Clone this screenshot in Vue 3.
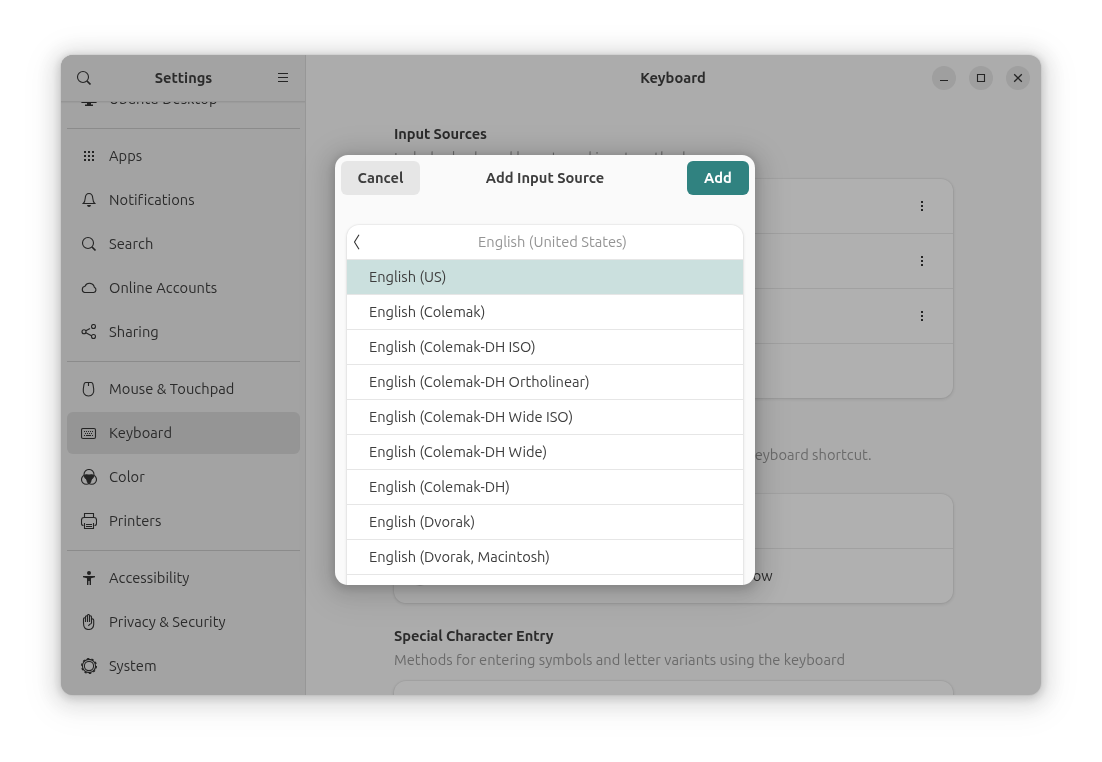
<script setup>
import { reactive } from 'vue'

const state = reactive({
  panel: 'Keyboard',
  layout: 'English (US)',
})

const groups = [
  [{ name: 'Ubuntu Desktop', icon: 'desktop' }],
  [
    { name: 'Apps', icon: 'apps' },
    { name: 'Notifications', icon: 'bell' },
    { name: 'Search', icon: 'search' },
    { name: 'Online Accounts', icon: 'cloud' },
    { name: 'Sharing', icon: 'share' },
  ],
  [
    { name: 'Mouse & Touchpad', icon: 'mouse' },
    { name: 'Keyboard', icon: 'keyboard' },
    { name: 'Color', icon: 'color' },
    { name: 'Printers', icon: 'printer' },
  ],
  [
    { name: 'Accessibility', icon: 'access' },
    { name: 'Privacy & Security', icon: 'hand' },
    { name: 'System', icon: 'system' },
  ],
]

const layouts = [
  'English (US)',
  'English (Colemak)',
  'English (Colemak-DH ISO)',
  'English (Colemak-DH Ortholinear)',
  'English (Colemak-DH Wide ISO)',
  'English (Colemak-DH Wide)',
  'English (Colemak-DH)',
  'English (Dvorak)',
  'English (Dvorak, Macintosh)',
  '',
]
</script>

<template>
  <div class="screen">
    <div class="window">
      <aside class="sidebar">
        <header class="side-header">
          <svg class="icon" viewBox="0 0 16 16"><circle cx="7" cy="7" r="5.5" /><path d="M11 11l3.500 3.500" stroke-width="1.700" /></svg>
          <span class="title">Settings</span>
          <svg class="icon" viewBox="0 0 16 16"><path d="M3 3.500h10M3 7.500h10M3 11.500h10" /></svg>
        </header>
        <nav class="nav">
          <div v-for="(group, i) in groups" :key="i" class="nav-group">
            <div
              v-for="item in group"
              :key="item.name"
              class="nav-item"
              :class="{ active: item.name === state.panel }"
              @click="state.panel = item.name"
            >
              <svg class="icon" viewBox="0 0 16 16">
                <template v-if="item.icon === 'desktop'">
                  <path d="M.5 2.500q0-1 1-1h13q1 0 1 1v8q0 1-1 1h-13q-1 0-1-1z" />
                  <path class="fill" d="M1 9.500h2v1.500H1zM13 9.500h2v1.500h-2zM6 11h4v2.500h2V15H4v-1.500h2z" />
                </template>
                <template v-else-if="item.icon === 'apps'">
                  <path class="fill" d="M3 3h2v2H3zM7 3h2v2H7zM11 3h2v2h-2zM3 7h2v2H3zM7 7h2v2H7zM11 7h2v2h-2zM3 11h2v2H3zM7 11h2v2H7zM11 11h2v2h-2z" />
                </template>
                <template v-else-if="item.icon === 'bell'">
                  <path d="M2.300 11.500h11.400c-1.500-1.200-1.700-2.500-1.900-5C11.600 3 10.300 1.500 8 1.500S4.400 3 4.200 6.500c-.2 2.500-.4 3.800-1.900 5z" />
                  <path class="fill" d="M6 13h4q-.3 2-2 2t-2-2z" />
                </template>
                <template v-else-if="item.icon === 'search'">
                  <circle cx="7" cy="7" r="5.500" />
                  <path d="M11 11l3.500 3.500" stroke-width="1.700" />
                </template>
                <template v-else-if="item.icon === 'cloud'">
                  <path d="M3.500 12.500h9.200a2.800 2.800 0 0 0 .6-5.300A4.900 4.900 0 0 0 4 6.300a3.200 3.200 0 0 0-.5 6.200z" />
                </template>
                <template v-else-if="item.icon === 'share'">
                  <circle cx="3" cy="7.700" r="2" />
                  <circle cx="12.500" cy="2.500" r="2" />
                  <circle cx="12.500" cy="12.500" r="2" />
                  <path d="M4.800 6.800L9 4.400M4.800 8.800l5.700 3" />
                </template>
                <template v-else-if="item.icon === 'mouse'">
                  <path d="M4.800 1.500h5.400q1.600 0 1.900 2.500l.6 4c.5 4-1.400 7-5.200 7S1.800 12 2.300 8l.6-4q.3-2.500 1.900-2.500zM7.500 1v4" />
                </template>
                <template v-else-if="item.icon === 'keyboard'">
                  <rect x=".5" y="3.500" width="14" height="10" rx="1.500" />
                  <path d="M3 6.500h10M4 8.500h8" stroke-dasharray="1 1" />
                  <path d="M3 10.500h1M5 10.500h5M11 10.500h1" />
                </template>
                <template v-else-if="item.icon === 'color'">
                  <circle cx="8" cy="5.500" r="5" />
                  <circle cx="5.300" cy="10.500" r="4.800" />
                  <circle cx="10.700" cy="10.500" r="4.800" />
                  <path class="fill" d="M3.500 6q4.500-1 9 0-.3 3-2 4.500Q10 13 8 14.500 6 13 5.500 10.500 3.800 9 3.500 6z" />
                </template>
                <template v-else-if="item.icon === 'printer'">
                  <path d="M3.500 4V.5h9V4M2.500 12.500q-2 0-2-2V7q0-2.500 2.500-2.500h10q2.500 0 2.500 2.500v3.500q0 2-2 2M3.500 10v5.500h9V10M5 11.500h6M5 13.500h6" />
                </template>
                <template v-else-if="item.icon === 'access'">
                  <circle class="fill" cx="8" cy="3" r="2" />
                  <path class="fill" d="M2 6h12v1.200l-4 1V15H8.600v-4H7.400v4H6V8.200l-4-1z" />
                </template>
                <template v-else-if="item.icon === 'hand'">
                  <path d="M2.500 9V5q0-1.300 1-1.300t1 1.300v3V3q0-1.200 1-1.200t1 1.200v5V1.800Q6.500.5 7.500.5t1 1.300V8 3q0-1.200 1-1.200t1 1.200v6.500V6q.2-1.200 1.200-1.200 1 .2 1 1.400v4q-.2 5.300-5.200 5.300-5 0-5-6.500zM10.500 9.500q-2.500.5-3 2.500" />
                </template>
                <template v-else>
                  <circle cx="8" cy="8" r="6.600" />
                  <circle cx="8" cy="8" r="4.600" />
                  <circle cx="8" cy="8" r="7.300" stroke-width="1.400" stroke-dasharray="2.300 2.287" />
                </template>
              </svg>
              <span>{{ item.name }}</span>
            </div>
          </div>
        </nav>
      </aside>

      <main class="content">
        <header class="main-header">
          <span class="title">Keyboard</span>
          <div class="controls">
            <button><svg class="icon" viewBox="0 0 16 16"><path d="M4 10.500h8" /></svg></button>
            <button><svg class="icon" viewBox="0 0 16 16"><path d="M4.500 4.500h7v7h-7z" /></svg></button>
            <button><svg class="icon" viewBox="0 0 16 16"><path d="M4.200 4.200l7.600 7.600M11.800 4.200l-7.600 7.600" stroke-width="1.300" /></svg></button>
          </div>
        </header>

        <section class="prefs">
          <h2>Input Sources</h2>
          <p>Includes keyboard layouts and input methods</p>
          <div class="card">
            <div v-for="n in 3" :key="n" class="row">
              <svg class="icon kebab" viewBox="0 0 16 16"><path class="fill" d="M7 3h2v2H7zM7 7h2v2H7zM7 11h2v2H7z" /></svg>
            </div>
            <div class="row"></div>
          </div>
        </section>

        <section class="prefs">
          <h2>Input Source Switching</h2>
          <p class="switch-text">Input sources can be switched using the Super+Space keyboard shortcut.</p>
          <div class="card">
            <div class="row"></div>
            <div class="row"><i class="radio"></i><span>Switch input sources individually for each window</span></div>
          </div>
        </section>

        <section class="prefs">
          <h2>Special Character Entry</h2>
          <p>Methods for entering symbols and letter variants using the keyboard</p>
          <div class="card">
            <div class="row"></div>
          </div>
        </section>
      </main>

      <div class="dialog">
        <header class="dialog-header">
          <button class="btn">Cancel</button>
          <span class="title">Add Input Source</span>
          <button class="btn suggested">Add</button>
        </header>
        <div class="layouts">
          <div class="layout-row back">
            <svg class="chevron" viewBox="0 0 8 16"><path d="M6.500 .8L2 8l4.500 7.200" /></svg>
            <span>English (United States)</span>
          </div>
          <div
            v-for="layout in layouts"
            :key="layout"
            class="layout-row"
            :class="{ selected: layout === state.layout }"
            @click="state.layout = layout"
          >
            {{ layout }}
          </div>
        </div>
      </div>
    </div>
  </div>
</template>

<style>
body {
  margin: 0;
  background: #fff;
}
</style>

<style scoped>
* {
  box-sizing: border-box;
}

.screen {
  width: 1102px;
  height: 762px;
  padding: 55px 61px;
  overflow: hidden;
  font-family: Ubuntu, "Noto Sans", sans-serif;
  font-size: 14.667px;
  font-weight: 400;
  letter-spacing: 0.02px;
  line-height: 20px;
  color: #2b2b2b;
  white-space: nowrap;
}

.window {
  position: relative;
  display: flex;
  width: 980px;
  height: 640px;
  border-radius: 12px;
  background: #acacac;
  box-shadow: 0 0 0 1px rgba(0, 0, 0, 0.04), 0 2px 8px 2px rgba(0, 0, 0, 0.14), 0 3px 20px 10px rgba(0, 0, 0, 0.09), 0 6px 32px 16px rgba(0, 0, 0, 0.04);
  will-change: transform;
}

button {
  border: 0;
  padding: 0;
  font: inherit;
  letter-spacing: inherit;
  color: inherit;
}

.icon {
  flex: none;
  display: block;
  width: 16px;
  height: 16px;
  fill: none;
  stroke: #242424;
  stroke-width: 1.1;
}

.fill {
  fill: #242424;
  stroke: none;
}

.title {
  font-weight: 600;
  letter-spacing: 0;
}

.sidebar {
  width: 245px;
  border-right: 1px solid #979797;
  border-radius: 12px 0 0 12px;
  background: #a3a3a3;
  overflow: hidden;
}

.side-header {
  position: relative;
  z-index: 1;
  display: flex;
  align-items: center;
  justify-content: space-between;
  height: 46px;
  padding: 0 14px 0 15px;
  background: #a3a3a3;
  box-shadow: 0 1px #959595, 0 2px 1px rgba(0, 0, 0, 0.04);
}

.nav {
  margin-top: -23px;
  padding: 0 5px 0 6px;
  letter-spacing: 0.05px;
}

.nav-group + .nav-group {
  margin-top: 8px;
  padding-top: 6px;
  border-top: 1px solid #8b8b8b;
}

.nav-item {
  display: flex;
  align-items: center;
  gap: 12px;
  height: 42px;
  padding-left: 14px;
  border-radius: 6px;
}

.nav-item + .nav-item {
  margin-top: 2px;
}

.nav-item.active {
  background: #959595;
}

.content {
  flex: 1;
  overflow: hidden;
  border-radius: 0 12px 12px 0;
}

.main-header {
  display: grid;
  grid-template-columns: 1fr auto 1fr;
  align-items: center;
  height: 46px;
  margin-bottom: 23px;
  padding: 0 11px 0 10px;
}

.main-header .title {
  grid-column: 2;
}

.controls {
  display: flex;
  justify-content: flex-end;
  gap: 13px;
}

.controls button {
  display: grid;
  place-items: center;
  width: 24px;
  height: 24px;
  border-radius: 50%;
  background: #9f9f9f;
}

.prefs {
  width: 559px;
  margin: 0 0 23px 88px;
}

.prefs h2 {
  margin: 0;
  font-size: inherit;
  font-weight: 600;
  letter-spacing: -0.09px;
  line-height: 20px;
}

.prefs p {
  height: 20px;
  margin: 4px 0 11px;
  color: #6a6a6a;
}

.prefs .switch-text {
  height: 38px;
}

.card {
  border-radius: 12px;
  background: #b0b0b0;
  box-shadow: 0 0 0 1px rgba(0, 0, 0, 0.04), 0 1px 3px 1px rgba(0, 0, 0, 0.08);
}

.row {
  display: flex;
  align-items: center;
  height: 55px;
  padding: 0 23px 0 16px;
  border-bottom: 1px solid #a1a1a1;
}

.row:last-child {
  height: 54px;
  border-bottom: 0;
}

.kebab {
  margin-left: auto;
}

.radio {
  width: 20px;
  height: 20px;
  margin-right: 17px;
  border: 2px solid #959595;
  border-radius: 50%;
}

.dialog {
  position: absolute;
  top: 100px;
  left: 274px;
  width: 420px;
  height: 430px;
  overflow: hidden;
  border-radius: 13px;
  background: #fafafa;
  color: #3d3d3d;
  box-shadow: 0 2px 8px 2px rgba(0, 0, 0, 0.14), 0 3px 20px 10px rgba(0, 0, 0, 0.09), 0 6px 32px 16px rgba(0, 0, 0, 0.04);
}

.dialog-header {
  display: grid;
  grid-template-columns: 1fr auto 1fr;
  align-items: center;
  height: 46px;
  padding: 0 6px;
}

.btn {
  justify-self: start;
  width: 79px;
  height: 34px;
  border-radius: 6px;
  background: #e6e6e6;
  font-weight: 600;
}

.btn.suggested {
  justify-self: end;
  width: 62px;
  background: #308280;
  color: #fff;
}

.layouts {
  width: 396px;
  margin: 24px 0 0 12px;
  overflow: hidden;
  border-radius: 12px;
  background: #fff;
  box-shadow: 0 0 0 1px rgba(0, 0, 0, 0.03), 0 1px 3px 1px rgba(0, 0, 0, 0.07);
}

.layout-row {
  height: 35px;
  padding-left: 22px;
  border-bottom: 1px solid #e6e6e6;
  letter-spacing: -0.01px;
  line-height: 34px;
}

.layout-row.selected {
  background: #cbe0de;
}

.back {
  display: flex;
  align-items: center;
  padding-left: 5px;
  letter-spacing: 0.02px;
}

.back span {
  flex: 1;
  padding-left: 1px;
  text-align: center;
  color: #949494;
}

.chevron {
  width: 9px;
  height: 16px;
  fill: none;
  stroke: #333;
  stroke-width: 1.1;
}
</style>
